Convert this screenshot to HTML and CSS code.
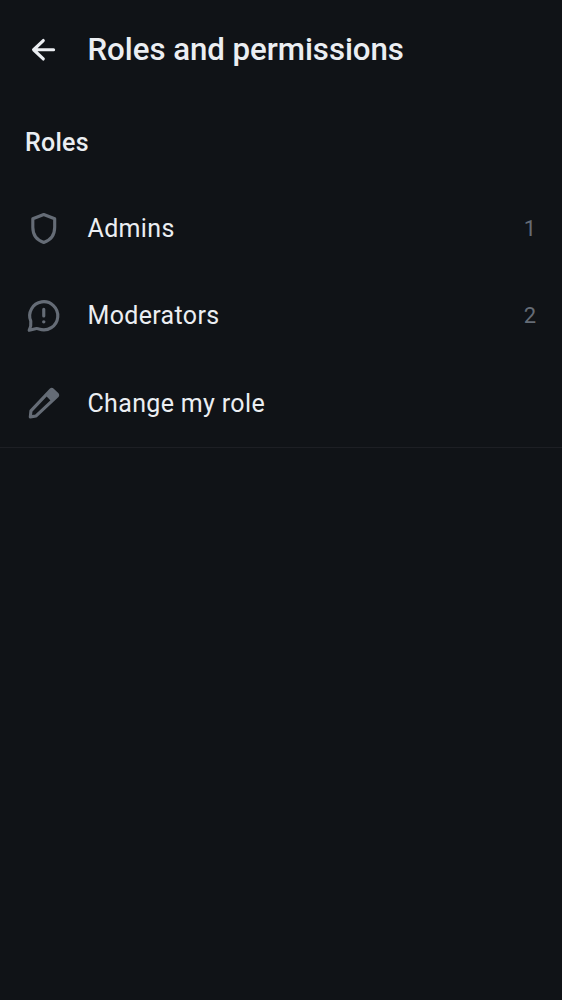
FILE: index.html
```html
<!DOCTYPE html>
<html lang="en">
<head>
<meta charset="utf-8">
<title>Roles and permissions</title>
<link rel="stylesheet" href="styles.css">
</head>
<body>
<header class="topbar">
  <svg class="icon back" viewBox="0 0 24 24"><path d="M11.7 6.1 5.5 12l6.2 5.9M5.7 12h12.6"/></svg>
  <h1 class="title">Roles and permissions</h1>
</header>
<main class="section">
  <h2 class="heading">Roles</h2>
  <div class="row">
    <svg class="icon" viewBox="0 0 24 24"><path d="M12 2.9 19 5.6v5.5c0 4.6-2.5 8.2-7 9.7-4.5-1.5-7-5.1-7-9.7V5.6z"/></svg>
    <span class="label">Admins</span><span class="count">1</span>
  </div>
  <div class="row">
    <svg class="icon" viewBox="0 0 24 24"><path d="M2.7 21.3Q4.1 18.4 3.7 15.5A9 9 0 1 1 9 20.5Q7.8 20 6.7 20.3zM12 7.9v4.2"/><circle class="solid" cx="12" cy="15.9" r="1.1"/></svg>
    <span class="label">Moderators</span><span class="count">2</span>
  </div>
  <div class="row">
    <svg class="icon" viewBox="0 0 24 24"><path d="M3.4 20.4l.4-3.8L16.5 3.1q.6-.6 1.2 0l2.9 2.8q.6.6 0 1.2L7.1 19.8z"/><path class="solid" d="M13.4 6.9 17 3l4 4-4.2 3.4z"/></svg>
    <span class="label">Change my role</span>
  </div>
</main>
</body>
</html>
```
FILE: styles.css
```css
body { margin: 0; background: #101317; color: #ebeef2; font-family: Roboto, sans-serif; }
.topbar { display: flex; align-items: center; height: 100px; padding-left: 25px; }
.icon { width: 37.5px; height: 37.5px; flex: none; fill: none; stroke: #656c76; stroke-width: 2; stroke-linejoin: round; stroke-linecap: round; }
.back { stroke: #ebeef2; }
.solid { fill: #656c76; stroke: none; }
.title { margin: 0 0 1px 25px; font-size: 31.25px; font-weight: 500; letter-spacing: -.05px; }
.section { border-bottom: 1px solid #1d1f24; }
.heading { box-sizing: border-box; margin: 0; padding: 1px 0 0 25px; height: 84.5px; line-height: 84px; font-size: 25px; font-weight: 500; letter-spacing: .25px; }
.row { display: flex; align-items: center; height: 87.5px; padding: 0 26px 0 25px; }
.label { margin-left: 25px; padding-top: .6px; flex: 1; font-size: 25px; line-height: 30px; letter-spacing: .34px; }
.count { padding-top: .6px; font-size: 22px; line-height: 26px; color: #656c76; }
```
